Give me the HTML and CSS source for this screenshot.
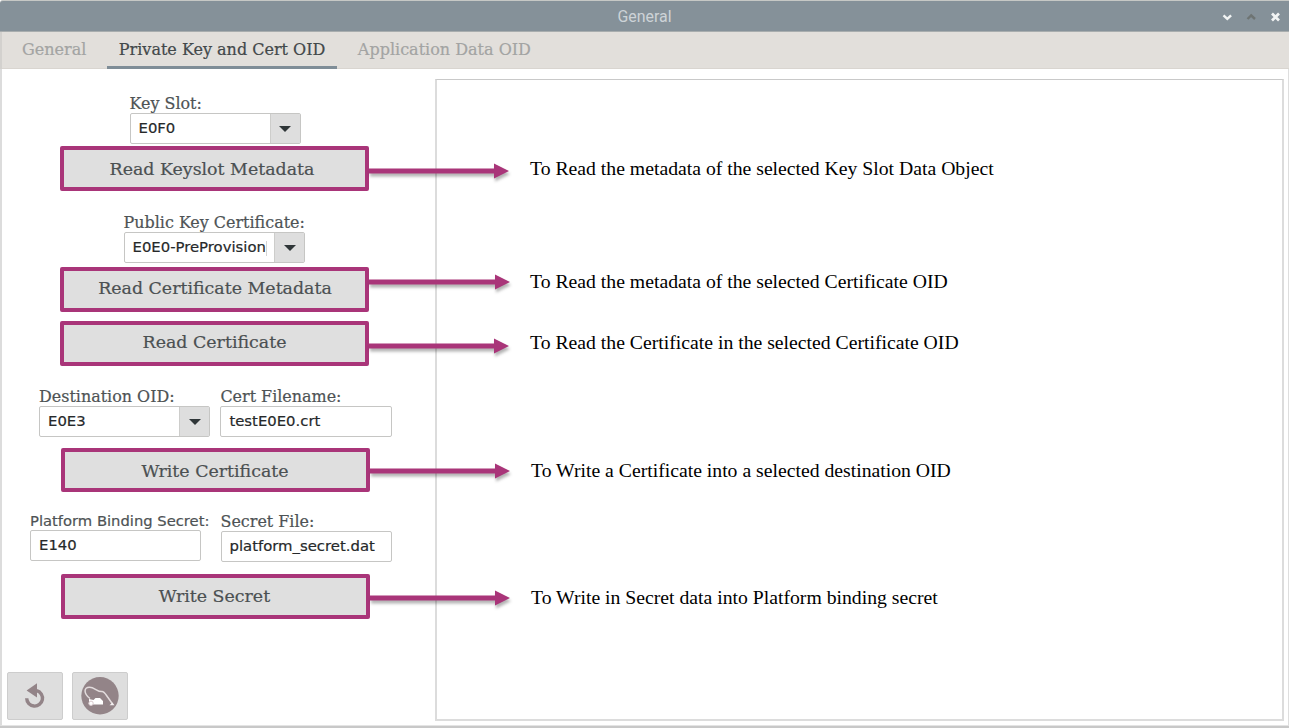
FILE: index.html
```html
<!DOCTYPE html>
<html lang="en">
<head>
<meta charset="utf-8">
<title>General</title>
<link rel="stylesheet" href="styles.css">
</head>
<body>
<div class="window">
  <header class="titlebar">
    <span class="title">General</span>
    <svg class="controls" width="64" height="12" viewBox="0 0 64 12" fill="none" stroke-width="2.4">
      <path d="M3.5 4.3 L7.3 7.8 L11.1 4.3" stroke="#f2f4f4"/>
      <path d="M27.5 8 L31.2 4.5 L35 8" stroke="#6e7473"/>
      <path d="M52 2.5 L59 9.5 M59 2.5 L52 9.5" stroke="#f2f4f4" stroke-width="2.7"/>
    </svg>
  </header>
  <nav class="tabs">
    <span class="tab">General</span>
    <span class="tab active">Private Key and Cert OID</span>
    <span class="tab">Application Data OID</span>
  </nav>
  <main class="content">
    <section class="panel">
      <div class="field keyslot">
        <label>Key Slot:</label>
        <div class="combo"><span class="value">E0F0</span><span class="drop"></span></div>
      </div>
      <div class="action read-keyslot">
        <button>Read Keyslot Metadata</button>
        <div class="callout"><svg class="arrow" width="141" height="16"><path d="M0 5.5H125V0.5L140 8L125 15.5V10.5H0Z"/></svg><span>To Read the metadata of the selected Key Slot Data Object</span></div>
      </div>
      <div class="field pubkey">
        <label>Public Key Certificate:</label>
        <div class="combo"><span class="value caret">E0E0-PreProvision</span><span class="drop"></span></div>
      </div>
      <div class="action read-meta">
        <button>Read Certificate Metadata</button>
        <div class="callout"><svg class="arrow" width="141" height="16"><path d="M0 5.5H126V0.5L141 8L126 15.5V10.5H0Z"/></svg><span>To Read the metadata of the selected Certificate OID</span></div>
      </div>
      <div class="action read-cert">
        <button>Read Certificate</button>
        <div class="callout"><svg class="arrow" width="141" height="16"><path d="M0 5.5H125V0.5L140 8L125 15.5V10.5H0Z"/></svg><span>To Read the Certificate in the selected Certificate OID</span></div>
      </div>
      <div class="pair dest">
        <div class="field">
          <label>Destination OID:</label>
          <div class="combo"><span class="value">E0E3</span><span class="drop"></span></div>
        </div>
        <div class="field">
          <label>Cert Filename:</label>
          <div class="combo"><span class="value">testE0E0.crt</span></div>
        </div>
      </div>
      <div class="action shifted write-cert">
        <button>Write Certificate</button>
        <div class="callout"><svg class="arrow" width="141" height="16"><path d="M0 5.5H125V0.5L140 8L125 15.5V10.5H0Z"/></svg><span>To Write a Certificate into a selected destination OID</span></div>
      </div>
      <div class="pair secret">
        <div class="field binding">
          <label>Platform Binding Secret:</label>
          <div class="combo"><span class="value">E140</span></div>
        </div>
        <div class="field">
          <label>Secret File:</label>
          <div class="combo"><span class="value">platform_secret.dat</span></div>
        </div>
      </div>
      <div class="action shifted write-secret">
        <button>Write Secret</button>
        <div class="callout"><svg class="arrow" width="141" height="16"><path d="M0 5.5H125V0.5L140 8L125 15.5V10.5H0Z"/></svg><span>To Write in Secret data into Platform binding secret</span></div>
      </div>
      <div class="tools">
        <button class="tool" aria-label="Reset">
          <svg width="54" height="46" viewBox="0 0 54 46">
            <path d="M18.7 25.3A7.9 7.9 0 1 0 28.8 17.6" fill="none" stroke="#938488" stroke-width="3.4"/>
            <path d="M18.6 17.4L29 10.2V24.4Z" fill="#938488"/>
          </svg>
        </button>
        <button class="tool" aria-label="Clear">
          <svg width="54" height="46" viewBox="0 0 54 46">
            <circle cx="27" cy="22.8" r="18.7" fill="#938488"/>
            <path d="M17 25.5C10.5 20.5 10.5 14.2 16.5 14.2C21.5 14.2 24.5 19 29 18.6C31.5 18.6 33 22 35 24.5L39.5 31" fill="none" stroke="#e3dcdd" stroke-width="1.5"/>
            <path d="M36.5 32.3L39.5 29.6L41.5 32.3Z" fill="#f4f0f1"/>
            <path d="M16 26L20.5 27L22.5 25H27L30 28V31.5H16Z" fill="#fff"/>
            <circle cx="18" cy="30.3" r="2.2" fill="#fff" stroke="#d9c9cd"/>
          </svg>
        </button>
      </div>
    </section>
    <section class="output"></section>
  </main>
</div>
</body>
</html>
```

FILE: styles.css
```css
* { box-sizing: border-box; }
body { margin: 0; background: #fff; overflow: hidden; }
.window {
  width: 1289px; height: 728px;
  display: flex; flex-direction: column;
  border-bottom: 2px solid #c8c8c8;
}
.titlebar {
  flex: none; height: 32px; display: grid;
  grid-template-columns: 1fr auto 1fr; align-items: center;
  background: #859199;
  border-top: 1px solid #c6c8c5; border-bottom: 1px solid #a8adae;
  border-radius: 3px 0 0 0;
}
.title { grid-column: 2; font: 15.9px/28px Roboto, sans-serif; color: #cdd3d7; padding-top: 2px; }
.controls { justify-self: end; margin: 1px 5px 0 0; }
.tabs {
  flex: none; height: 37px; display: flex; padding-left: 8px;
  background: #e2dfdb;
  border-left: 2px solid #d3d1ce;
  box-shadow: inset 0 -1px #d9d5d0;
  font: 16px/36px "DejaVu Serif", serif;
}
.tab {
  height: 37px; padding: 0 12px; margin-right: 8.5px;
  color: #a3a4a3; border-bottom: 3px solid transparent; white-space: nowrap;
  -webkit-text-stroke: .2px currentColor;
}
.tab.active { color: #42484a; border-bottom-color: #7f8d97; }
.content {
  flex: 1; min-height: 0; display: flex; padding: 10px 4px 4px 0;
  border-left: 2px solid #dcdcdc; border-right: 1px solid #dedede; border-bottom: 1px solid #e4e4e4;
}
.panel { width: 433px; flex: none; display: flex; flex-direction: column; align-items: flex-start; }
.output { flex: 1; border: 2px solid #dcdcdc; border-top: 1px solid #c9c9c9; }

.field { display: flex; flex-direction: column; }
label {
  height: 20px; white-space: nowrap; color: #4e5355;
  font: 15.95px/21px "DejaVu Serif", serif;
  -webkit-text-stroke: .2px currentColor;
}
.combo {
  width: 171.4px; height: 31px; display: flex;
  border: 1px solid #c6c6c4; border-radius: 2px; background: #fff;
}
.value {
  flex: 1; padding-left: 8px; white-space: nowrap; color: #26292a;
  font: 14.85px/28px "DejaVu Sans", sans-serif;
  -webkit-text-stroke: .2px currentColor;
}
.caret::after { content: ""; display: inline-block; width: 1px; height: 15px; background: #d4d4d4; vertical-align: -4px; }
.drop { width: 30px; flex: none; background: #dedede; border-left: 1px solid #cdcdcb; display: flex; align-items: center; justify-content: center; }
.drop::before { content: ""; border: 6px solid transparent; border-top-color: #2f3638; border-bottom: 0; }

.keyslot { margin: 14px 0 2px 127.5px; }
.pubkey { margin: 21px 0 4px 121.5px; }
.pubkey .combo { width: 181.5px; }
.pair { display: flex; gap: 10px; }
.dest { margin: 20px 0 11px 37px; }
.secret { margin: 19px 0 12px 28px; gap: 19px; }
.binding { width: 171.5px; }
.binding label { font: 14.75px/19px "DejaVu Sans", sans-serif; height: 19px; }

.action { position: relative; width: 309px; height: 45px; margin-left: 58px; flex: none; }
.action.shifted { margin-left: 59px; }
.action > button {
  display: block; width: 100%; height: 100%; padding: 0;
  background: #dfdfdf; border: 4px solid #a93579; border-radius: 2px;
  font: 17.4px/34px "DejaVu Serif", serif; color: #4b5052;
  -webkit-text-stroke: .2px currentColor;
}
.read-cert { margin-top: 9px; }
.write-cert { height: 44px; }
.read-keyslot > button { padding: 1px 5px 0 0; }
.read-meta > button { padding: 0 0 3px 1px; }
.read-cert > button { padding-bottom: 3px; }
.write-cert > button { padding: 1px 1px 0 0; }
.write-secret > button { padding: 0 2px 1px 0; }

.callout {
  position: absolute; left: 100%; top: 16.5px;
  display: flex; align-items: flex-start; white-space: nowrap;
  font: 19.72px/16px "Liberation Serif", serif; color: #000;
}
.callout span { margin: -2.5px 0 0 20px; }
.arrow { overflow: visible; flex: none; filter: drop-shadow(1px 3px 1.5px rgba(0,0,0,.3)); }
.arrow path { fill: #a93579; }
.read-meta .callout { top: 6.5px; }
.write-cert .callout { top: 14.5px; }
.write-secret .callout { top: 15.5px; }
.read-cert .callout span { margin-top: -3.5px; }
.read-meta .callout span, .write-cert .callout span, .write-secret .callout span { margin-top: -.5px; }

.tools { display: flex; gap: 9px; margin: auto 0 1px 5px; }
.tool { width: 56px; height: 48px; padding: 0; background: #dedede; border: 1px solid #cdcdcd; border-radius: 2px; overflow: hidden; }
.tool svg { display: block; filter: blur(.35px); }
```
